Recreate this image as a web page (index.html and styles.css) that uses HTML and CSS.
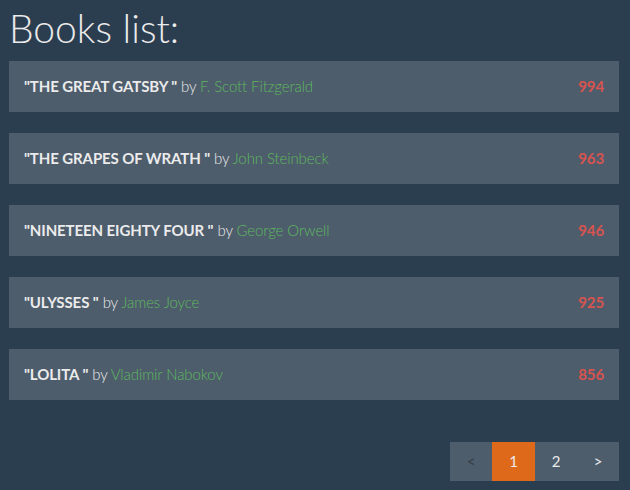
FILE: index.html
```html
<!DOCTYPE html>
<html>
<head>
<meta charset="utf-8">
<link rel="stylesheet" href="styles.css">
</head>
<body>
<div class="container">
  <h1 class="title">Books list:</h1>
  <div class="book">
    <div><strong>"THE GREAT GATSBY "</strong> by <span class="author">F. Scott Fitzgerald</span></div>
    <span class="count">994</span>
  </div>
  <div class="book">
    <div><strong>"THE GRAPES OF WRATH "</strong> by <span class="author">John Steinbeck</span></div>
    <span class="count">963</span>
  </div>
  <div class="book">
    <div><strong>"NINETEEN EIGHTY FOUR "</strong> by <span class="author">George Orwell</span></div>
    <span class="count">946</span>
  </div>
  <div class="book">
    <div><strong>"ULYSSES "</strong> by <span class="author">James Joyce</span></div>
    <span class="count">925</span>
  </div>
  <div class="book">
    <div><strong>"LOLITA "</strong> by <span class="author">Vladimir Nabokov</span></div>
    <span class="count">856</span>
  </div>
  <div class="pager-row">
    <ul class="pagination">
      <li class="page disabled">&lt;</li>
      <li class="page active">1</li>
      <li class="page">2</li>
      <li class="page">&gt;</li>
    </ul>
  </div>
</div>
</body>
</html>
```
FILE: styles.css
```css
html, body {
  margin: 0;
  padding: 0;
  background: #2b3e50;
}
body {
  font-family: Lato, "Open Sans", sans-serif;
  font-size: 15px;
  line-height: 21px;
  color: #ebebeb;
  font-weight: 300;
}
.container {
  width: 610px;
  margin-left: 9px;
}
.title {
  font-size: 39px;
  font-weight: 300;
  line-height: 1.1;
  margin: 7px 0 11px;
  color: #ebebeb;
}
.book {
  background: #4e5d6c;
  padding: 15px 15px;
  margin-bottom: 21px;
  display: flex;
  justify-content: space-between;
  align-items: center;
  letter-spacing: -0.1px;
}
.book strong {
  font-weight: 700;
}
.author {
  color: #5cb85c;
}
.count {
  color: #d9534f;
  font-weight: 700;
}
.pager-row {
  display: flex;
  justify-content: flex-end;
  margin-top: 42px;
}
.pagination {
  display: flex;
  list-style: none;
  margin: 0;
  padding: 0;
}
.page {
  width: 42px;
  height: 39px;
  display: flex;
  align-items: center;
  justify-content: center;
  background: #4e5d6c;
  color: #ebebeb;
  font-weight: 400;
}
.page.active {
  background: #df691a;
  width: 43px;
}
.page.disabled {
  color: #323c46;
}
```
